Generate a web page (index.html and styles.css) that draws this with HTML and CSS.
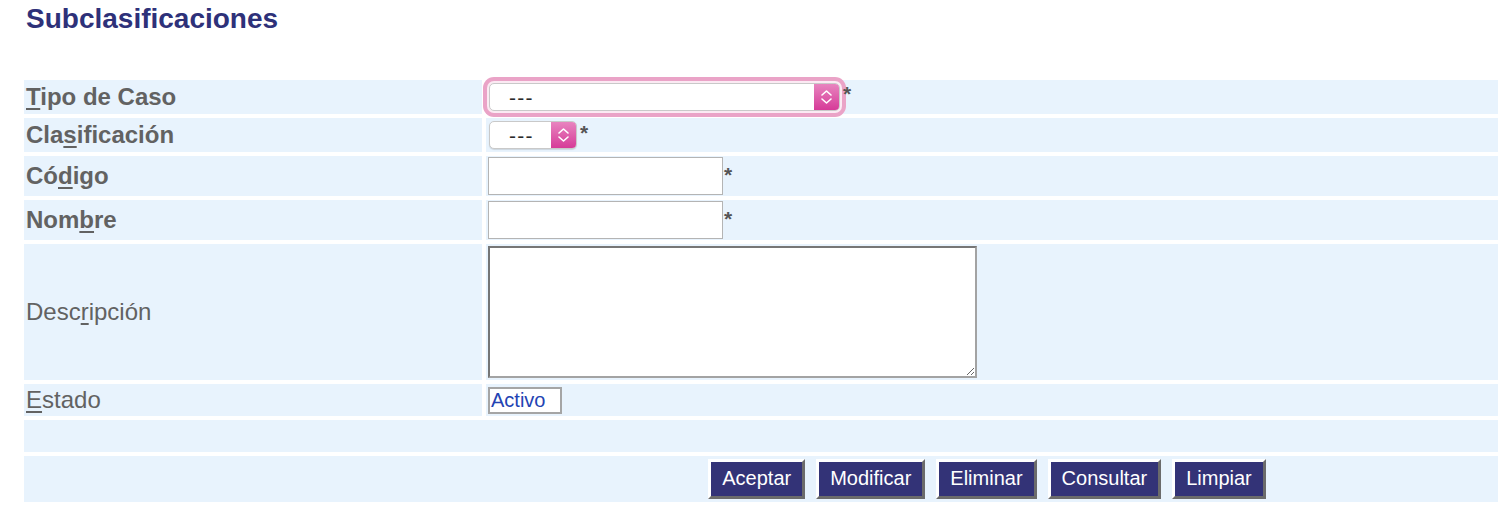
FILE: index.html
```html
<!DOCTYPE html>
<html lang="es">
<head>
<meta charset="utf-8">
<title>Subclasificaciones</title>
<link rel="stylesheet" href="styles.css">
</head>
<body>
<h1 class="title">Subclasificaciones</h1>
<div class="form">
  <div class="lbl strong"><span><u>T</u>ipo de Caso</span></div>
  <div class="val">
    <span class="sel sel-wide focus">
      <select class="sel-input"><option>---</option></select>
      <span class="step"><svg width="25" height="26" viewBox="0 0 25 26"><path d="M8 11 L12.5 7 L17 11 M8 15 L12.5 19 L17 15" fill="none" stroke="#fff" stroke-width="1.6" stroke-linecap="round" stroke-linejoin="round"/></svg></span>
    </span>
    <span class="req req-1">*</span>
  </div>

  <div class="lbl strong"><span>Cla<u>s</u>ificación</span></div>
  <div class="val">
    <span class="sel sel-small">
      <select class="sel-input"><option>---</option></select>
      <span class="step"><svg width="25" height="26" viewBox="0 0 25 26"><path d="M8 11 L12.5 7 L17 11 M8 15 L12.5 19 L17 15" fill="none" stroke="#fff" stroke-width="1.6" stroke-linecap="round" stroke-linejoin="round"/></svg></span>
    </span>
    <span class="req req-2">*</span>
  </div>

  <div class="lbl strong"><span>Có<u>d</u>igo</span></div>
  <div class="val">
    <input class="txt" type="text">
    <span class="req req-3">*</span>
  </div>

  <div class="lbl strong"><span>Nom<u>b</u>re</span></div>
  <div class="val">
    <input class="txt" type="text">
    <span class="req req-3">*</span>
  </div>

  <div class="lbl"><span>Desc<u>r</u>ipción</span></div>
  <div class="val">
    <textarea class="area"></textarea>
  </div>

  <div class="lbl"><span><u>E</u>stado</span></div>
  <div class="val">
    <span class="estado">Activo</span>
  </div>

  <div class="wide"></div>

  <div class="wide actions">
    <button class="btn">Aceptar</button>
    <button class="btn">Modificar</button>
    <button class="btn">Eliminar</button>
    <button class="btn">Consultar</button>
    <button class="btn">Limpiar</button>
  </div>
</div>
</body>
</html>
```

FILE: styles.css
```css
html, body {
  margin: 0;
  padding: 0;
  background: #ffffff;
  overflow-x: hidden;
}

body {
  font-family: "Liberation Sans", Arial, Helvetica, sans-serif;
}

.title {
  margin: 3px 0 0 26px;
  font-size: 28px;
  line-height: 32px;
  font-weight: bold;
  color: #2e3179;
}

.form {
  display: grid;
  grid-template-columns: 458px 1fr;
  grid-template-rows: 34px 34px 40px 40px 136px 32px 32px 46px;
  gap: 4px;
  margin: 45px 0 0 24px;
}

.lbl {
  background: #e8f3fd;
  display: flex;
  align-items: center;
  padding-left: 2px;
  font-size: 24px;
  color: #626262;
}

.lbl.strong {
  font-weight: bold;
}

.lbl u {
  text-decoration-thickness: 2px;
  text-underline-offset: 3px;
}

.val {
  background: #e8f3fd;
  display: flex;
  align-items: center;
  padding-left: 2px;
}

.wide {
  grid-column: 1 / span 2;
  background: #e8f3fd;
}

/* Selects */
.sel {
  display: inline-flex;
  height: 28px;
  box-sizing: border-box;
  border: 1px solid #c9c9c9;
  border-radius: 5px;
  background: #ffffff;
  overflow: hidden;
  box-shadow: 0 1px 1px rgba(0, 0, 0, 0.12);
  margin-left: 1px;
}

.sel.focus {
  box-shadow: 0 0 0 2px #fbeaf3, 0 0 0 6px #eaa3c7;
}

.sel-wide {
  width: 351px;
}

.sel-small {
  width: 88px;
}

.sel-input {
  appearance: none;
  -webkit-appearance: none;
  flex: 1;
  min-width: 0;
  border: none;
  outline: none;
  background: transparent;
  padding: 0 0 0 19px;
  margin: 0;
  font-family: "Liberation Sans", Arial, sans-serif;
  font-size: 21px;
  letter-spacing: 1.3px;
  color: #2a2a2a;
}

.step {
  width: 25px;
  flex: none;
  display: flex;
  align-items: center;
  justify-content: center;
  background: linear-gradient(#e884bf, #d63b98);
}

.step svg {
  display: block;
}

/* Required mark */
.req {
  align-self: flex-start;
  font-size: 21px;
  line-height: 23px;
  font-weight: bold;
  color: #555555;
  margin-left: 3px;
}

.req-1 { margin-top: 2px; margin-left: 3px; }
.req-2 { margin-top: 3px; margin-left: 3px; }
.req-3 { margin-top: 7px; margin-left: 1px; }

/* Text inputs */
.txt {
  width: 235px;
  height: 38px;
  box-sizing: border-box;
  border: 1px solid #b4b4b4;
  background: #ffffff;
  margin: 0;
  padding: 2px 4px;
  font-family: "Liberation Sans", Arial, sans-serif;
  font-size: 20px;
}

.area {
  width: 489px;
  height: 132px;
  box-sizing: border-box;
  margin: 0;
  border: 2px solid;
  border-color: #767676 #a3a3a3 #a3a3a3 #767676;
  background: #ffffff;
  font-family: "Liberation Sans", Arial, sans-serif;
  font-size: 20px;
}

.estado {
  display: inline-block;
  width: 74px;
  height: 27px;
  box-sizing: border-box;
  border: 2px solid #a5a5a5;
  background: #ffffff;
  padding: 0 1px;
  font-size: 20px;
  line-height: 23px;
  color: #2343b3;
}

/* Buttons */
.actions {
  display: flex;
  justify-content: center;
  align-items: center;
  gap: 11px;
  padding-left: 452px;
}

.btn {
  margin: 0;
  padding: 5px 11px 6px;
  border: 3px solid;
  border-color: #ffffff #6b6b6b #6b6b6b #ffffff;
  background: #333377;
  color: #ffffff;
  font-family: "Liberation Sans", Arial, sans-serif;
  font-size: 20px;
  line-height: 23px;
}
```
